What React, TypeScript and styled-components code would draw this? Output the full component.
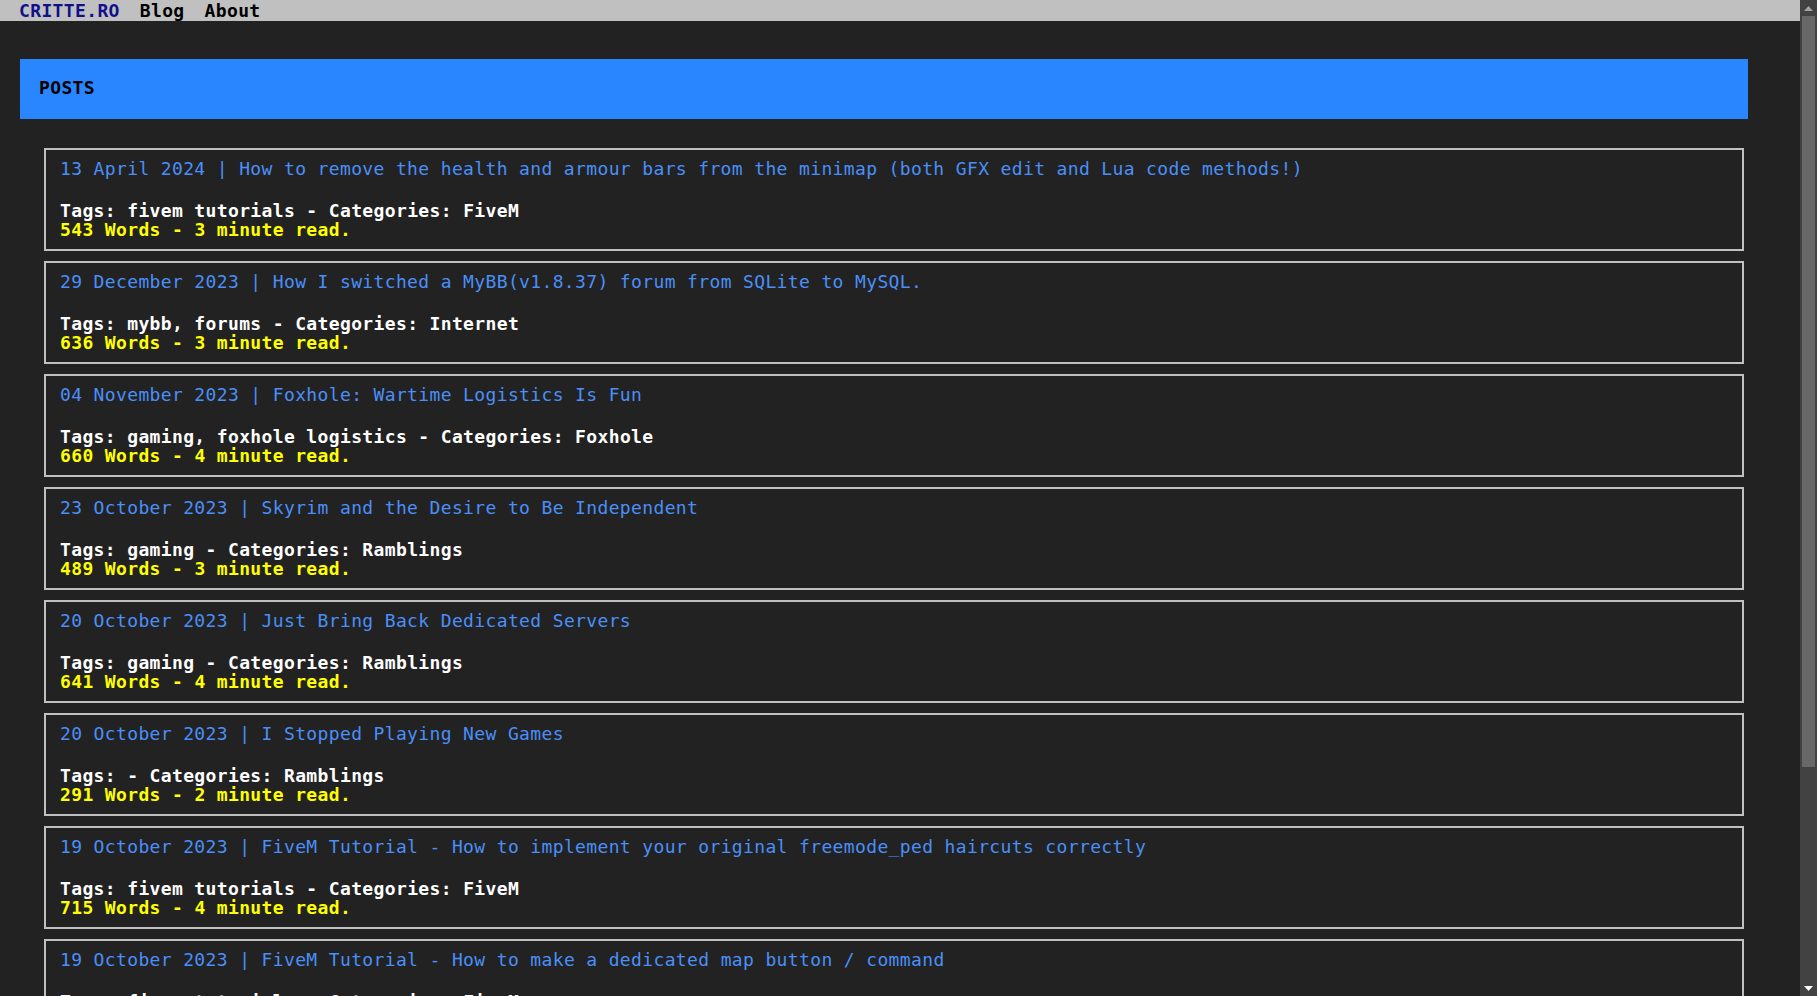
import React from 'react';
import styled, { createGlobalStyle } from 'styled-components';

type Post = {
  date: string;
  title: string;
  tags: string;
  category: string;
  words: number;
  minutes: number;
};

const posts: Post[] = [
  {
    date: '13 April 2024',
    title: 'How to remove the health and armour bars from the minimap (both GFX edit and Lua code methods!)',
    tags: 'fivem tutorials',
    category: 'FiveM',
    words: 543,
    minutes: 3,
  },
  {
    date: '29 December 2023',
    title: 'How I switched a MyBB(v1.8.37) forum from SQLite to MySQL.',
    tags: 'mybb, forums',
    category: 'Internet',
    words: 636,
    minutes: 3,
  },
  {
    date: '04 November 2023',
    title: 'Foxhole: Wartime Logistics Is Fun',
    tags: 'gaming, foxhole logistics',
    category: 'Foxhole',
    words: 660,
    minutes: 4,
  },
  {
    date: '23 October 2023',
    title: 'Skyrim and the Desire to Be Independent',
    tags: 'gaming',
    category: 'Ramblings',
    words: 489,
    minutes: 3,
  },
  {
    date: '20 October 2023',
    title: 'Just Bring Back Dedicated Servers',
    tags: 'gaming',
    category: 'Ramblings',
    words: 641,
    minutes: 4,
  },
  {
    date: '20 October 2023',
    title: 'I Stopped Playing New Games',
    tags: '',
    category: 'Ramblings',
    words: 291,
    minutes: 2,
  },
  {
    date: '19 October 2023',
    title: 'FiveM Tutorial - How to implement your original freemode_ped haircuts correctly',
    tags: 'fivem tutorials',
    category: 'FiveM',
    words: 715,
    minutes: 4,
  },
  {
    date: '19 October 2023',
    title: 'FiveM Tutorial - How to make a dedicated map button / command',
    tags: 'fivem tutorials',
    category: 'FiveM',
    words: 402,
    minutes: 2,
  },
];

const GlobalStyle = createGlobalStyle`
  body {
    margin: 0;
    background: #222222;
    font-family: "DejaVu Sans Mono", "Liberation Mono", monospace;
    font-size: 18px;
    letter-spacing: 0.36px;
    line-height: 19px;
  }
`;

// window frame: page on the left, (drawn) scrollbar on the right
const Frame = styled.div`
  display: flex;
  height: 100vh;
  overflow: hidden;
`;

const Page = styled.div`
  flex: 1;
  min-width: 0;
  overflow: hidden;
`;

const Scrollbar = styled.div`
  width: 17px;
  flex: none;
  display: flex;
  flex-direction: column;
  background: #424242;
`;

const ArrowButton = styled.div`
  height: 16px;
  display: flex;
  align-items: center;
  justify-content: center;
`;

const Track = styled.div`
  flex: 1;
  padding: 0 2px;
`;

const Thumb = styled.div`
  height: 751px;
  background: #686868;
`;

const Nav = styled.nav`
  display: flex;
  gap: 20px;
  height: 21px;
  line-height: 21px;
  padding-left: 19px;
  background: #c0c0c0;
`;

const NavLink = styled.a<{ $brand?: boolean }>`
  color: ${p => (p.$brand ? '#10108a' : '#000000')};
  font-weight: bold;
  text-decoration: none;
  cursor: pointer;
`;

const Main = styled.main`
  padding: 38px 52px 0 20px;
`;

const Header = styled.h1`
  margin: 0;
  padding: 19px 19px 22px;
  background: #2a86ff;
  color: #000000;
  font-size: 18px;
  font-weight: bold;
  line-height: 19px;
`;

const PostList = styled.div`
  display: flex;
  flex-direction: column;
  gap: 10px;
  margin: 29px 4px 10px 24px;
`;

const PostCard = styled.article`
  border: 2px solid #c0c0c0;
  padding: 9px 14px 10px;
`;

const PostTitle = styled.a`
  display: block;
  color: #4a8ff8;
  text-decoration: none;
  margin-bottom: 23px;
  white-space: nowrap;
`;

const Meta = styled.div<{ $accent?: boolean }>`
  color: ${p => (p.$accent ? '#ffff00' : '#ffffff')};
  font-weight: bold;
`;

function Arrow({ down, color }: { down?: boolean; color: string }) {
  return (
    <svg width="9" height="5" viewBox="0 0 9 5">
      <path d={down ? 'M0 0H9L4.5 5Z' : 'M0 5H9L4.5 0Z'} fill={color} />
    </svg>
  );
}

function PostItem({ post }: { post: Post }) {
  return (
    <PostCard>
      <PostTitle>
        {post.date} | {post.title}
      </PostTitle>
      <Meta>
        Tags: {post.tags}
        {post.tags ? ' ' : ''}- Categories: {post.category}
      </Meta>
      <Meta $accent>
        {post.words} Words - {post.minutes} minute read.
      </Meta>
    </PostCard>
  );
}

export default function App() {
  return (
    <>
      <GlobalStyle />
      <Frame>
        <Page>
          <Nav>
            <NavLink $brand>CRITTE.RO</NavLink>
            <NavLink>Blog</NavLink>
            <NavLink>About</NavLink>
          </Nav>
          <Main>
            <Header>POSTS</Header>
            <PostList>
              {posts.map((post, i) => (
                <PostItem key={i} post={post} />
              ))}
            </PostList>
          </Main>
        </Page>
        <Scrollbar>
          <ArrowButton>
            <Arrow color="#a3a3a3" />
          </ArrowButton>
          <Track>
            <Thumb />
          </Track>
          <ArrowButton>
            <Arrow down color="#ffffff" />
          </ArrowButton>
        </Scrollbar>
      </Frame>
    </>
  );
}
